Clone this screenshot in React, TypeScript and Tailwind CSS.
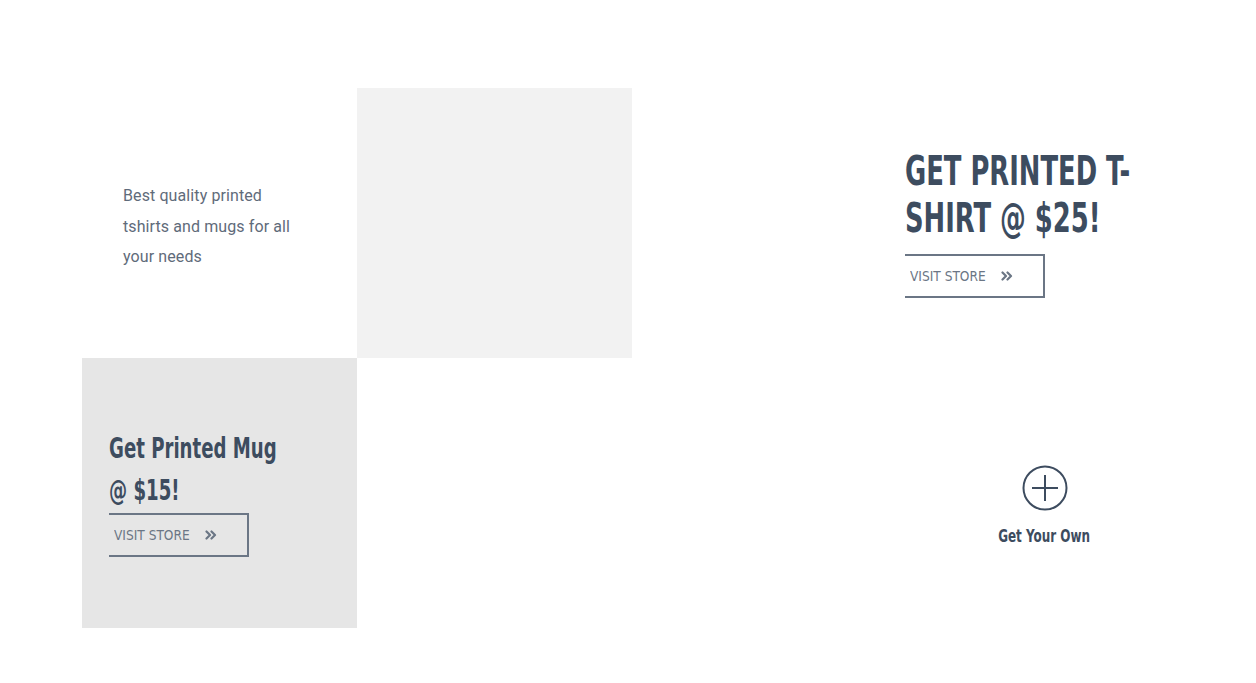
import React from "react";

const cond = { fontFamily: '"DejaVu Sans Condensed", "Liberation Sans", sans-serif' };

function Chevrons() {
  return (
    <svg width="12" height="10" viewBox="0 0 12 10" fill="none" stroke="#6b7685" strokeWidth="2.2" strokeLinecap="round" strokeLinejoin="round">
      <path d="M1.5 1.5 L5 5 L1.5 8.5" />
      <path d="M6.5 1.5 L10 5 L6.5 8.5" />
    </svg>
  );
}

function VisitButton() {
  return (
    <a className="flex items-center w-[140px] h-[44px] border-t-2 border-r-2 border-b-2 border-[#6b7685] pl-[5px] text-[14px] text-[#6b7685] gap-[13px]" style={cond}>
      <span className="whitespace-nowrap scale-x-[0.97] origin-left">VISIT STORE</span>
      <Chevrons />
    </a>
  );
}

export default function App() {
  return (
    <div className="w-[1256px] h-[683px] bg-white pt-[88px] pl-[82px]" style={{ fontFamily: 'Roboto, "Liberation Sans", sans-serif' }}>
      <div className="grid grid-cols-[275px_275px_275px_275px] grid-rows-[270px_270px]">
        <div className="flex items-center pl-[41px] pr-[50px] pt-[8px]">
          <p className="text-[16px] leading-[30.5px] text-[#5f6b7a] tracking-[0.1px]">Best quality printed tshirts and mugs for all your needs</p>
        </div>
        <div className="bg-[#f2f2f2]" />
        <div />
        <div className="pt-[60px] -ml-[2px]">
          <h2 className="text-[41px] leading-[47px] font-bold text-[#3d4c5f] whitespace-nowrap scale-x-[0.70] origin-left" style={cond}>GET PRINTED T-<br />SHIRT @ $25!</h2>
          <div className="mt-[12px]">
            <VisitButton />
          </div>
        </div>
        <div className="bg-[#e6e6e6] pl-[27px] pt-[70px]">
          <h3 className="text-[28px] leading-[42px] font-bold text-[#3d4c5f] whitespace-nowrap scale-x-[0.72] origin-left" style={cond}>Get Printed Mug<br />@ $15!</h3>
          <div className="mt-[1px]">
            <VisitButton />
          </div>
        </div>
        <div />
        <div />
        <div className="flex flex-col items-center pt-[107px]">
          <svg width="46" height="46" viewBox="0 0 46 46" fill="none" stroke="#3d4c5f" strokeWidth="2">
            <circle cx="23" cy="23" r="21.5" />
            <path d="M23 10 V36 M10 23 H36" />
          </svg>
          <div className="mt-[11px] text-[18px] font-bold text-[#3d4c5f] whitespace-nowrap scale-x-[0.74]" style={cond}>Get Your Own</div>
        </div>
      </div>
    </div>
  );
}
